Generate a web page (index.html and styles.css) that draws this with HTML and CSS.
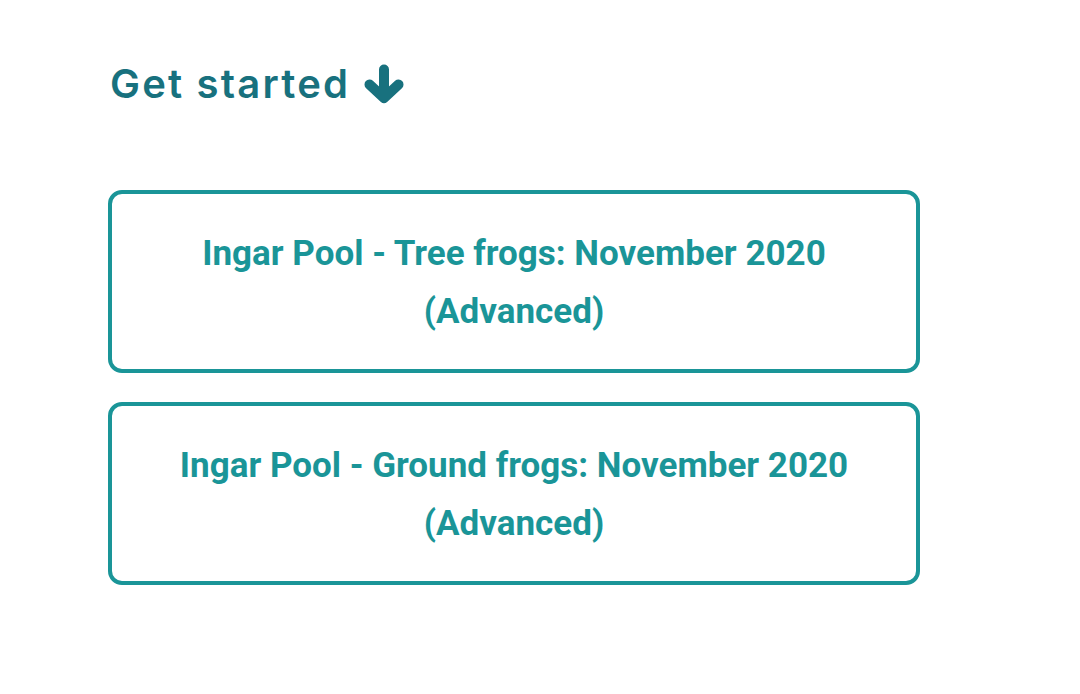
FILE: index.html
```html
<!DOCTYPE html>
<html>
<head>
<meta charset="utf-8">
<link rel="stylesheet" href="styles.css">
</head>
<body>
<main class="page">
  <h2 class="title">Get started
    <svg class="arrow" viewBox="0 0 42 40" aria-hidden="true"><path d="M21 5.5V31M6.5 20.5L21 34L35.5 20.5"/></svg>
  </h2>
  <div class="cards">
    <a class="card" href="#">Ingar Pool - Tree frogs: November 2020<br>(Advanced)</a>
    <a class="card" href="#">Ingar Pool - Ground frogs: November 2020<br>(Advanced)</a>
  </div>
</main>
</body>
</html>
```
FILE: styles.css
```css
html, body {
  margin: 0;
  padding: 0;
  background: #ffffff;
}
.page {
  padding: 58px 160px 0 108px;
  width: 812px;
}
.title {
  margin: 0 0 80px 2px;
  font-family: Inter, "Open Sans", sans-serif;
  font-weight: 600;
  font-size: 40px;
  line-height: 52px;
  letter-spacing: 2.2px;
  color: #18717e;
  display: flex;
  align-items: center;
  gap: 13px;
}
.arrow {
  width: 42px;
  height: 40px;
  fill: none;
  stroke: #18717e;
  stroke-width: 10;
  stroke-linecap: round;
  stroke-linejoin: round;
}
.cards {
  display: flex;
  flex-direction: column;
  gap: 29px;
}
.card {
  display: block;
  border: 4px solid #1a9598;
  border-radius: 14px;
  padding: 31px 20px 28px;
  text-align: center;
  font-family: Roboto, "Liberation Sans", sans-serif;
  font-weight: 700;
  font-size: 35px;
  line-height: 58px;
  color: #1a9598;
  text-decoration: none;
}
```
